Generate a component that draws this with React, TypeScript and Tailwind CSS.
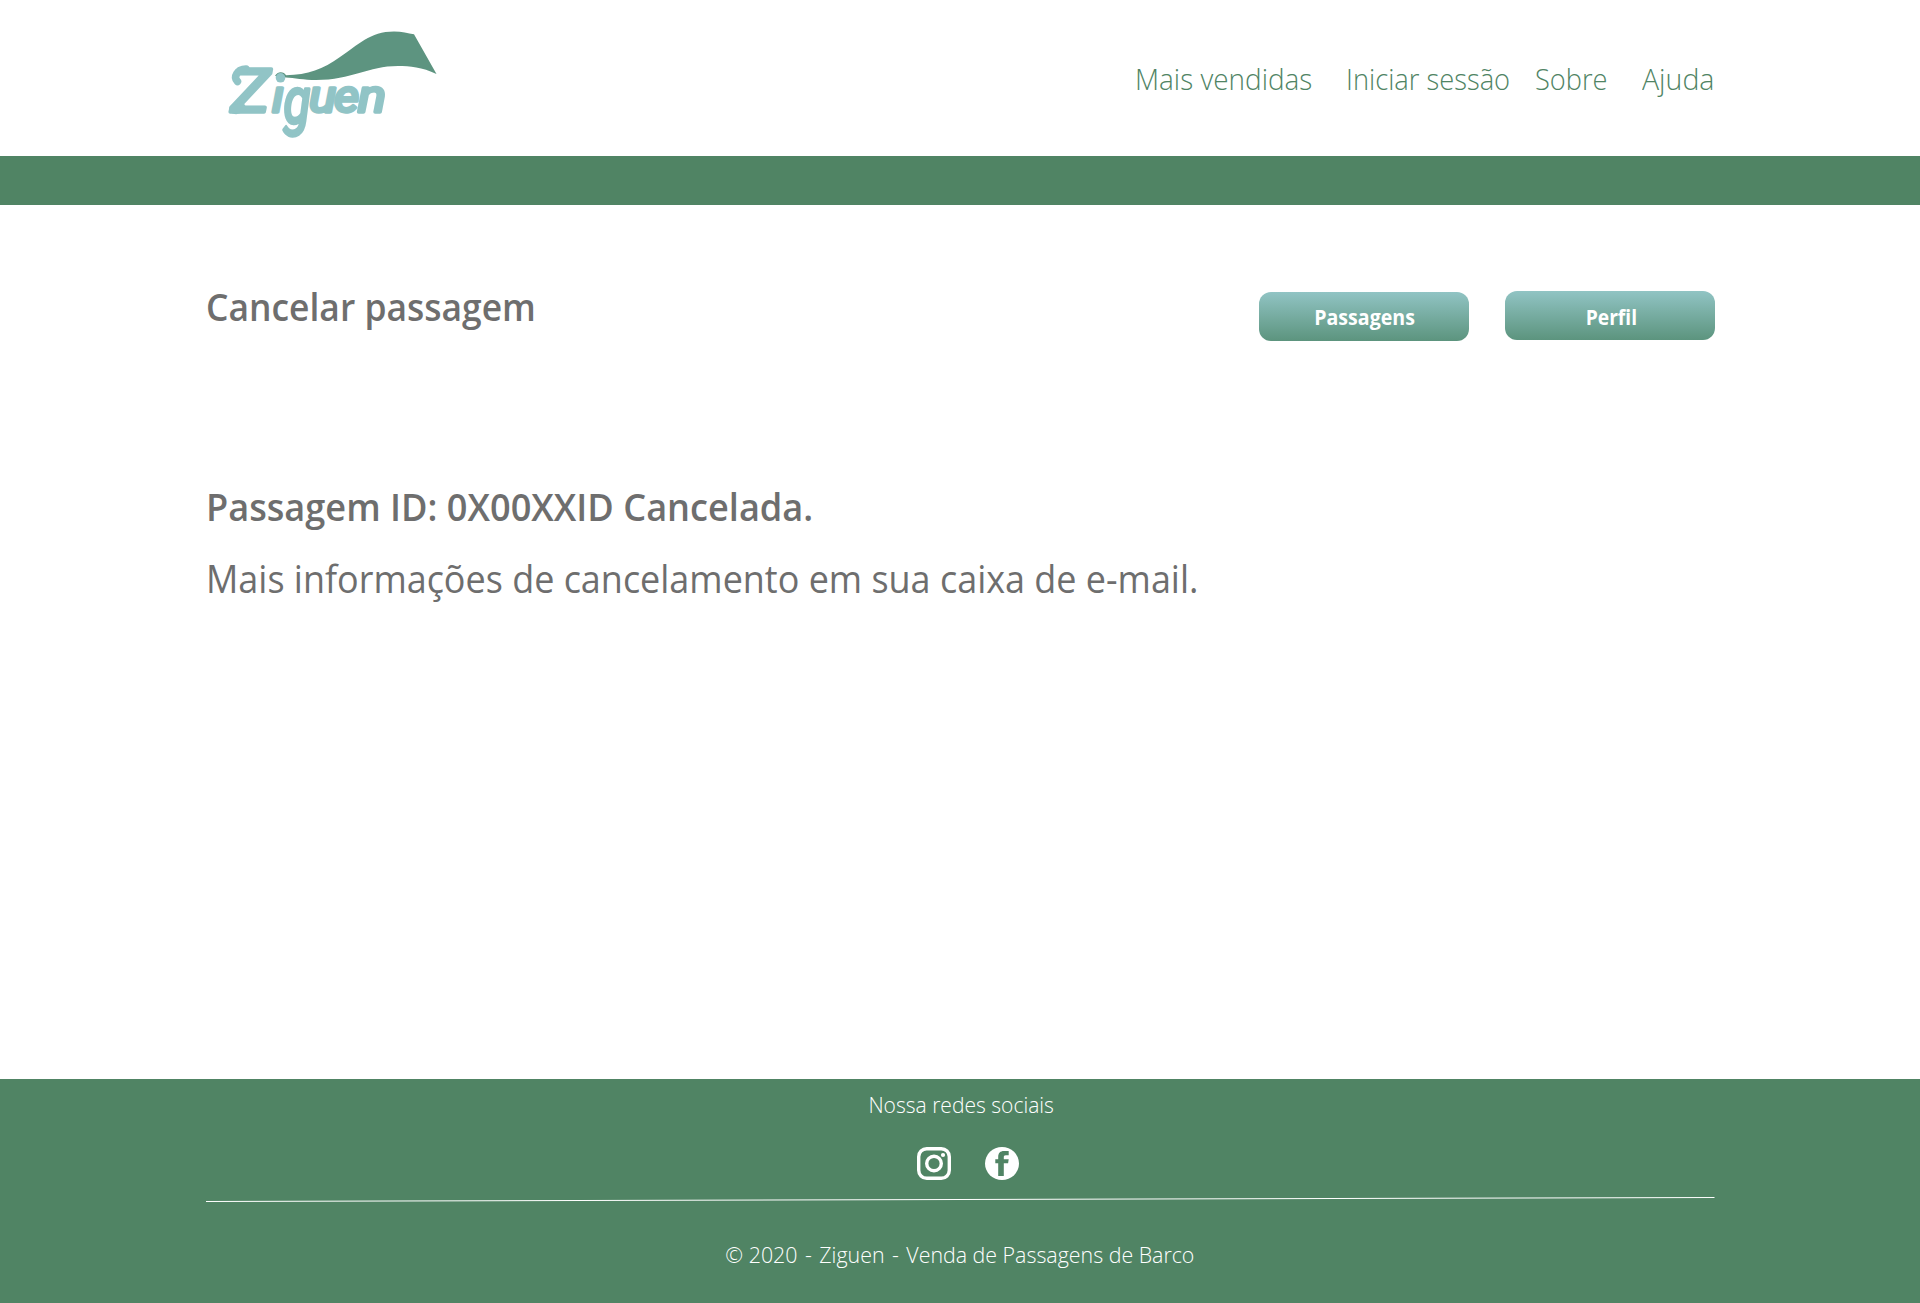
const navItems = [
  { label: "Mais vendidas", box: "w-[211px]", scale: "scale-x-[.93]" },
  { label: "Iniciar sessão", box: "w-[189px]", scale: "scale-x-[.91]" },
  { label: "Sobre", box: "w-[107px]", scale: "scale-x-[.907]" },
  { label: "Ajuda", box: "w-[72px]", scale: "scale-x-[.95]" },
];

const wordmark = [
  { ch: "Z", x: 21, y: 91.5, size: 60, width: 39 },
  { ch: "ı", x: 62, y: 92, size: 45, width: 12 },
  { ch: "g", x: 73.5, y: 103, size: 64, width: 27 },
  { ch: "u", x: 99, y: 92, size: 45, width: 27 },
  { ch: "e", x: 124, y: 92, size: 45, width: 25 },
  { ch: "n", x: 148, y: 92, size: 45, width: 28 },
];

function Logo() {
  return (
    <svg width="240" height="130" viewBox="0 0 240 130" aria-label="Ziguen">
      <path
        d="M65 56C67 51 74 51 76 55.200C98 55 113 49 130 37C148 25 160 11.500 184 11.500C192 11.500 198 13.500 204 14.200L226.500 54C212 47 200 46 188 46C158 46 142 60 106 60C94 60 84 58 76 57.500Z"
        fill="#5d9480"
      />
      <circle cx="70.500" cy="57.800" r="4.800" fill="#91c4c6" />
      <text
        fill="#91c4c6"
        stroke="#91c4c6"
        strokeWidth="3.400"
        strokeLinejoin="round"
        fontFamily="Roboto"
        fontWeight="400"
        fontStyle="italic"
      >
        {wordmark.map((l) => (
          <tspan key={l.ch} x={l.x} y={l.y} fontSize={l.size} textLength={l.width} lengthAdjust="spacingAndGlyphs">
            {l.ch}
          </tspan>
        ))}
      </text>
      <g fill="none" stroke="#91c4c6" strokeWidth="7.500" strokeLinecap="round">
        <path d="M27.500 61.500C23 57 27 49.500 36 49" />
        <path d="M24 89C27 90 29 89 31 87.500" strokeWidth="9.500" />
      </g>
    </svg>
  );
}

function Instagram() {
  return (
    <svg width="34" height="33" viewBox="0 0 34 33" fill="none" stroke="#fff">
      <rect x="1.700" y="1.700" width="30.600" height="29.600" rx="8" strokeWidth="3.400" />
      <circle cx="17" cy="16.500" r="7.300" strokeWidth="3.400" />
      <circle cx="26" cy="8" r="2.100" fill="#fff" stroke="none" />
    </svg>
  );
}

function Facebook() {
  return (
    <svg width="34" height="33" viewBox="0 0 34 33">
      <ellipse cx="17" cy="16.500" rx="17" ry="16.500" fill="#fff" />
      <path
        d="M13.200 29V16.300H10.300V12.200H13.200V10C13.200 6 15.200 4 19 4H23.700V8.200H20.800C19.200 8.200 18.800 9 18.800 10.200V12.200H23.700L23.100 16.300H18.800V29Z"
        fill="#508464"
      />
    </svg>
  );
}

export default function App() {
  return (
    <div className="flex h-[1303px] w-[1920px] flex-col overflow-hidden bg-white font-['Open_Sans',sans-serif] whitespace-nowrap text-[#6e6e6e]">
      <header className="flex h-[156px] shrink-0 items-start pt-5 pl-[210px]">
        <Logo />
        <nav className="mt-[39px] ml-[685px] flex text-[30px] leading-[40px] font-light text-[#508464]">
          {navItems.map((n) => (
            <a key={n.label} className={n.box}>
              <span className={`inline-block origin-left ${n.scale}`}>{n.label}</span>
            </a>
          ))}
        </nav>
      </header>
      <div className="h-[49px] shrink-0 bg-[#508464]" />

      <main className="flex grow flex-col pt-[75px] pr-[205px] pl-[206px]">
        <div className="flex h-[200px] items-start justify-between">
          <h1 className="origin-left scale-x-[.932] text-[38px] leading-[52px] font-semibold">Cancelar passagem</h1>
          <div className="mt-[11px] flex gap-9 text-[22px] leading-[49px] font-bold text-white">
            <button className="mt-px h-[49px] w-[210px] rounded-xl bg-linear-to-b from-[#91c4c4] to-[#5c947e] pl-px">
              <span className="inline-block scale-x-[.89]">Passagens</span>
            </button>
            <button className="h-[49px] w-[210px] rounded-xl bg-linear-to-b from-[#91c4c4] to-[#5c947e] pl-0.5 leading-[51px]">
              <span className="inline-block scale-x-[.875]">Perfil</span>
            </button>
          </div>
        </div>
        <h2 className="origin-left scale-x-[.951] self-start text-[38px] leading-[52px] font-semibold">
          Passagem ID: 0X00XXID Cancelada.
        </h2>
        <p className="mt-5 origin-left scale-x-[.946] self-start text-[38px] leading-[52px]">
          Mais informações de cancelamento em sua caixa de e-mail.
        </p>
      </main>

      <footer className="flex h-[224px] shrink-0 flex-col items-center bg-[#508464] text-white">
        <p className="mt-[10px] ml-0.5 scale-x-[.935] text-[22.5px] leading-[32px] font-light">Nossa redes sociais</p>
        <div className="mt-[26px] ml-4 flex gap-[34px]">
          <Instagram />
          <Facebook />
        </div>
        <svg className="mt-4" width="1510" height="8" viewBox="0 0 1510 8">
          <path d="M1 5.500L1509.500 1.500" stroke="#fff" />
        </svg>
        <p className="mt-[35px] scale-x-[.95] text-[22.5px] leading-[32px] font-light">
          © 2020 <span className="px-0.5">-</span> Ziguen <span className="px-0.5">-</span> Venda de Passagens de Barco
        </p>
      </footer>
    </div>
  );
}
